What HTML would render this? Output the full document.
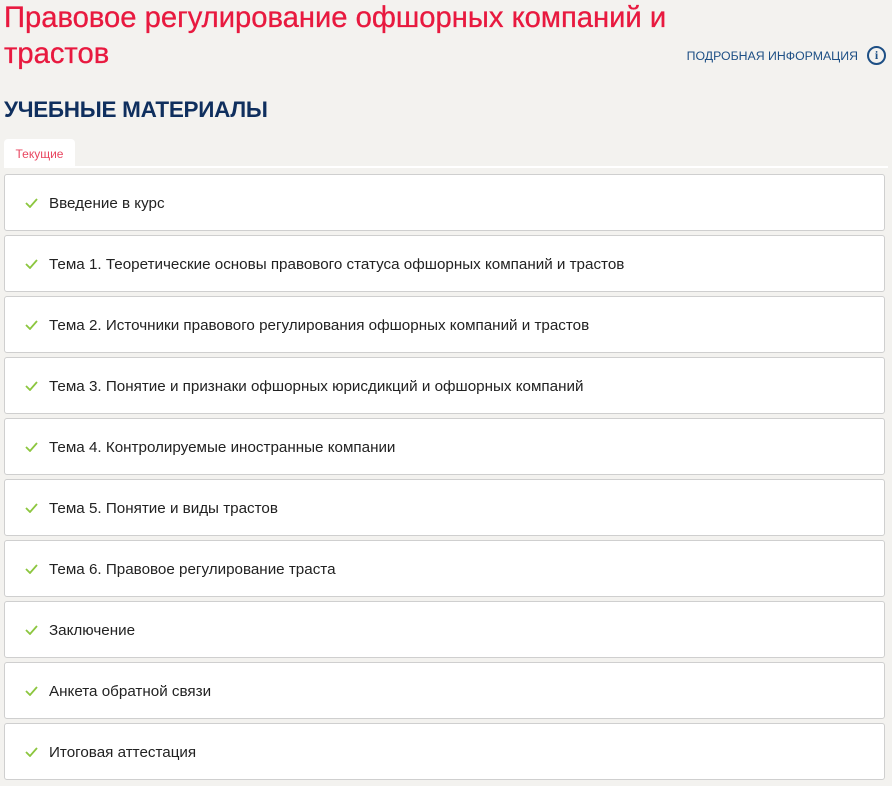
<!DOCTYPE html>
<html><head><meta charset="utf-8"><style>
body{margin:0;background:#f3f2ef;font-family:"Liberation Sans","DejaVu Sans",sans-serif;width:892px;height:786px;overflow:hidden;position:relative}
h1{position:absolute;left:4px;top:0;margin:0;font-size:29.2px;line-height:36px;font-weight:normal;color:#e8193f;width:720px;-webkit-text-stroke:0.3px #e8193f}
.info{position:absolute;right:6px;top:46px;color:#1d4f85;font-size:12.3px;display:flex;align-items:center;gap:9px}
.info .i{width:19px;height:19px;border:2px solid #1d4f85;border-radius:50%;box-sizing:border-box;font-size:12px;font-weight:bold;display:flex;align-items:center;justify-content:center;font-family:"Liberation Serif",serif}
h2{position:absolute;left:4px;top:97px;margin:0;font-size:22.5px;color:#0f2f5e;font-weight:bold;letter-spacing:-0.3px}
.tab{position:absolute;left:4px;top:139px;width:71px;height:28px;background:#fff;border-radius:4px 4px 0 0;color:#e8455f;font-size:12px;line-height:30px;text-align:center}
.line{position:absolute;left:4px;right:4px;top:166px;height:2px;background:#fff}
.row{position:absolute;left:4px;width:879px;height:55px;background:#fff;border:1px solid #cfcfcf;border-radius:3px;font-size:15.2px;color:#222;line-height:57px}
.row span{position:absolute;left:44px}
.row svg{position:absolute;left:20px;top:23px}
</style></head><body>
<h1>Правовое регулирование офшорных компаний и трастов</h1>
<div class="info">ПОДРОБНАЯ ИНФОРМАЦИЯ <div class="i">i</div></div>
<h2>УЧЕБНЫЕ МАТЕРИАЛЫ</h2>
<div class="tab">Текущие</div>
<div class="line"></div>
<div class="row" style="top:174px"><svg width="13" height="10"><path d="M1 5l4 4 7-8" fill="none" stroke="#8cc63f" stroke-width="1.8"/></svg><span>Введение в курс</span></div>
<div class="row" style="top:235px"><svg width="13" height="10"><path d="M1 5l4 4 7-8" fill="none" stroke="#8cc63f" stroke-width="1.8"/></svg><span>Тема 1. Теоретические основы правового статуса офшорных компаний и трастов</span></div>
<div class="row" style="top:296px"><svg width="13" height="10"><path d="M1 5l4 4 7-8" fill="none" stroke="#8cc63f" stroke-width="1.8"/></svg><span>Тема 2. Источники правового регулирования офшорных компаний и трастов</span></div>
<div class="row" style="top:357px"><svg width="13" height="10"><path d="M1 5l4 4 7-8" fill="none" stroke="#8cc63f" stroke-width="1.8"/></svg><span>Тема 3. Понятие и признаки офшорных юрисдикций и офшорных компаний</span></div>
<div class="row" style="top:418px"><svg width="13" height="10"><path d="M1 5l4 4 7-8" fill="none" stroke="#8cc63f" stroke-width="1.8"/></svg><span>Тема 4. Контролируемые иностранные компании</span></div>
<div class="row" style="top:479px"><svg width="13" height="10"><path d="M1 5l4 4 7-8" fill="none" stroke="#8cc63f" stroke-width="1.8"/></svg><span>Тема 5. Понятие и виды трастов</span></div>
<div class="row" style="top:540px"><svg width="13" height="10"><path d="M1 5l4 4 7-8" fill="none" stroke="#8cc63f" stroke-width="1.8"/></svg><span>Тема 6. Правовое регулирование траста</span></div>
<div class="row" style="top:601px"><svg width="13" height="10"><path d="M1 5l4 4 7-8" fill="none" stroke="#8cc63f" stroke-width="1.8"/></svg><span>Заключение</span></div>
<div class="row" style="top:662px"><svg width="13" height="10"><path d="M1 5l4 4 7-8" fill="none" stroke="#8cc63f" stroke-width="1.8"/></svg><span>Анкета обратной связи</span></div>
<div class="row" style="top:723px"><svg width="13" height="10"><path d="M1 5l4 4 7-8" fill="none" stroke="#8cc63f" stroke-width="1.8"/></svg><span>Итоговая аттестация</span></div>
</body></html>
